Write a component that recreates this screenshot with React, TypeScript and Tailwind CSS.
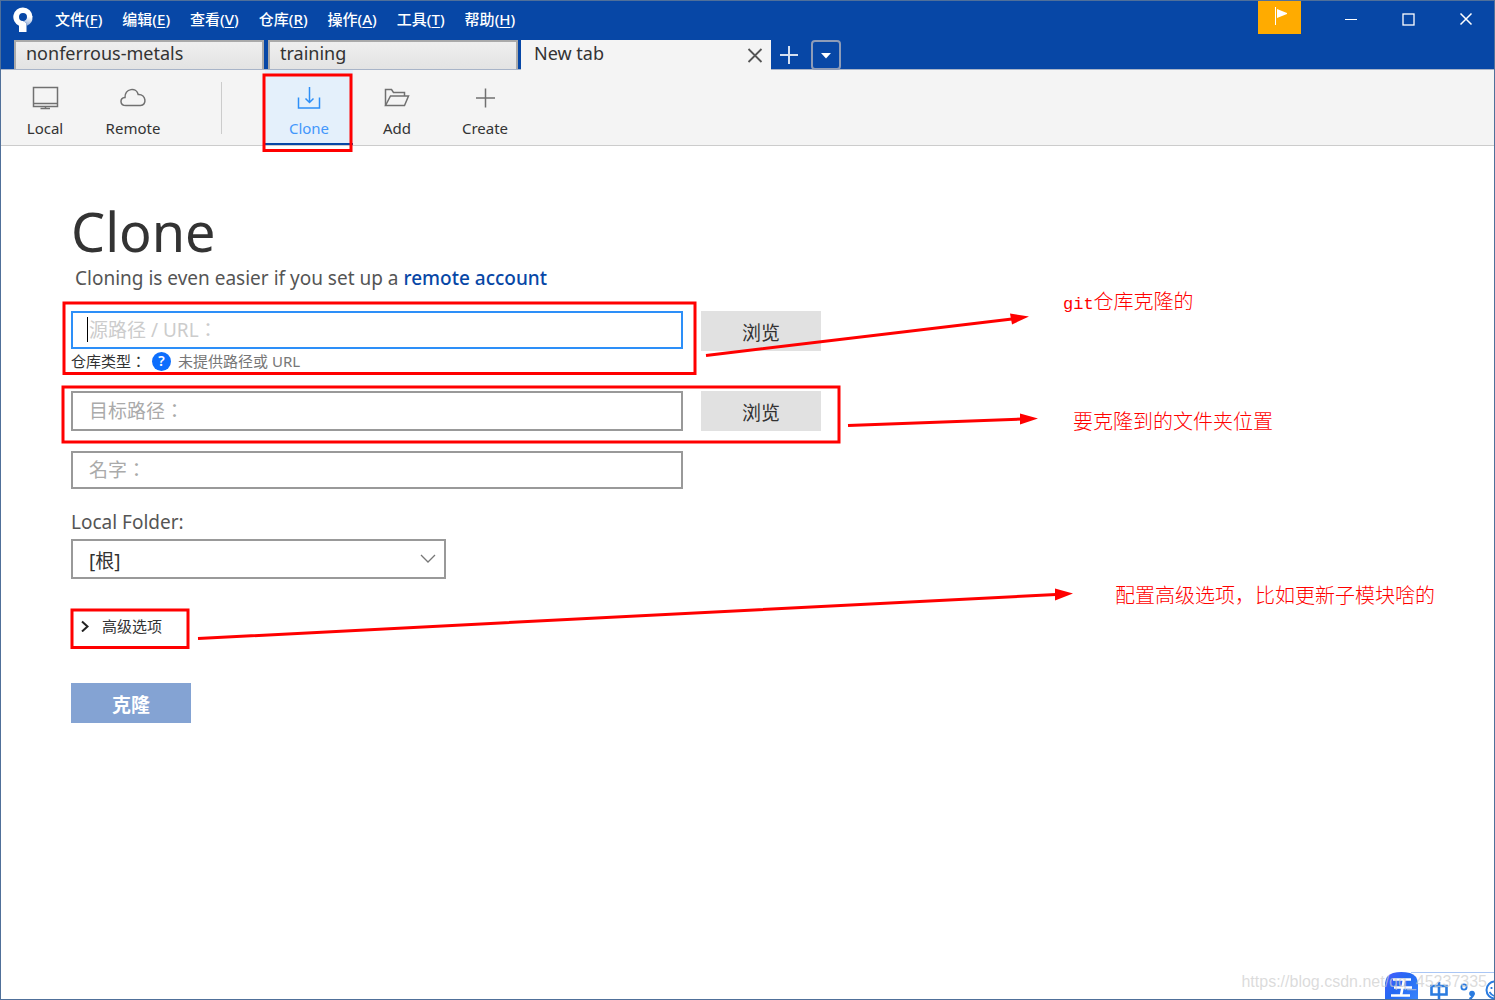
import type { ReactNode } from 'react';

const MENUS = [
  { label: '文件', hotkey: 'F' },
  { label: '编辑', hotkey: 'E' },
  { label: '查看', hotkey: 'V' },
  { label: '仓库', hotkey: 'R' },
  { label: '操作', hotkey: 'A' },
  { label: '工具', hotkey: 'T' },
  { label: '帮助', hotkey: 'H' },
];

const NOTES = [
  { prefix: 'git', text: '仓库克隆的', place: 'left-[1063px] top-[287px]' },
  { prefix: '', text: '要克隆到的文件夹位置', place: 'left-[1073px] top-[407px]' },
  { prefix: '', text: '配置高级选项，比如更新子模块啥的', place: 'left-[1115px] top-[581px]' },
];

function Logo() {
  return (
    <svg width="20" height="26" viewBox="0 0 20 26" aria-hidden="true">
      <defs>
        <linearGradient id="shade" x1="0.6" y1="0" x2="0.4" y2="1">
          <stop offset="0" stopColor="#ffffff" />
          <stop offset="1" stopColor="#8fabd8" />
        </linearGradient>
      </defs>
      <path d="M10 0.5 A9.5 9.5 0 0 0 6 18.7 V25 H13.5 V16 L10 14 A4 4 0 1 1 14 10 L19.5 10 A9.5 9.5 0 0 0 10 0.5Z" fill="#fff" />
      <path d="M14 9.5 H19.5 A9.5 9.5 0 0 1 13.5 19 V16 L10 14 A4 4 0 0 0 14 9.5Z" fill="url(#shade)" />
    </svg>
  );
}

function TitleBar() {
  return (
    <header className="flex h-[39px] items-start text-white">
      <div className="flex h-[37px] w-[46px] items-center pl-3">
        <Logo />
      </div>
      <nav className="flex h-[36px] items-center gap-[10px]">
        {MENUS.map((m) => (
          <button key={m.hotkey} className="px-[5px] text-[15px] leading-5 font-medium first:pl-2">
            {m.label}(<span className="underline underline-offset-2">{m.hotkey}</span>)
          </button>
        ))}
      </nav>
      <div className="ml-auto flex items-start">
        <button aria-label="Notifications" className="mr-5 flex h-[33px] w-[43px] justify-center bg-[#ffab00] pt-[6px]">
          <svg width="14" height="19" viewBox="0 0 14 19">
            <path d="M2.5 0 V18" stroke="#fff" strokeWidth="1" />
            <path d="M4 2 L15 6.5 L4 11 Z" fill="#fff" />
          </svg>
        </button>
        <button aria-label="Minimize" className="flex h-[36px] w-[58px] items-center justify-center">
          <svg width="14" height="14" viewBox="0 0 14 14" fill="none" stroke="#fff">
            <path d="M2 7.5 H14" />
          </svg>
        </button>
        <button aria-label="Maximize" className="flex h-[36px] w-[58px] items-center justify-center">
          <svg width="14" height="14" viewBox="0 0 14 14" fill="none" stroke="#fff">
            <rect x="2" y="2" width="11" height="11" strokeWidth="1.3" />
          </svg>
        </button>
        <button aria-label="Close" className="flex h-[36px] w-[57px] items-center justify-center">
          <svg width="14" height="14" viewBox="0 0 14 14" fill="none" stroke="#fff">
            <path d="M1.5 1.5 L12.5 12.5 M12.5 1.5 L1.5 12.5" strokeWidth="1.5" />
          </svg>
        </button>
      </div>
    </header>
  );
}

function TabBar() {
  return (
    <div className="flex h-[30px] items-stretch border-b border-[#a8b4c8] pl-[13px] text-lg leading-[26px] text-[#333]">
      <button className="mr-1 w-[250px] border-x-2 border-t-2 border-[#aaa] bg-linear-to-b from-[#efefef] to-[#e3e3e3] pl-[10px] text-left leading-[22px]">
        <span className="block h-full">nonferrous-metals</span>
      </button>
      <button className="mr-[3px] w-[250px] border-x-2 border-t-2 border-[#aaa] bg-linear-to-b from-[#efefef] to-[#e3e3e3] pl-[10px] text-left leading-[22px]">
        <span className="block h-full">training</span>
      </button>
      <div className="-mb-px flex w-[250px] justify-between bg-[#f4f4f4] pr-2 pl-[13px]">
        <span>New tab</span>
        <button aria-label="Close tab" className="flex items-center">
          <svg width="16" height="16" viewBox="0 0 16 16" fill="none" stroke="#555" strokeWidth="1.8">
            <path d="M1.5 2 L14.5 15 M14.5 2 L1.5 15" />
          </svg>
        </button>
      </div>
      <button aria-label="New tab" className="flex items-center pl-[9px]">
        <svg width="18" height="18" viewBox="0 0 18 18" fill="none" stroke="#d5e0f0" strokeWidth="2">
          <path d="M9 0 V18 M0 9 H18" />
        </svg>
      </button>
      <button
        aria-label="Tab list"
        className="-mb-px ml-[13px] flex w-[30px] items-center justify-center rounded-sm border-2 border-[#8d9cb8]"
      >
        <svg width="12" height="8" viewBox="0 0 12 8">
          <path d="M1 2 H11 L6 7.5 Z" fill="#fff" />
        </svg>
      </button>
    </div>
  );
}

function ToolButton({ label, active, children }: { label: string; active?: boolean; children: ReactNode }) {
  return (
    <button
      className={`flex w-[88px] flex-col items-center border-b-2 pt-[13px] text-[15px] leading-5 ${
        active ? 'border-[#0747a6] bg-[#e4f0fb] text-[#4297fb]' : 'border-transparent text-[#333]'
      }`}
    >
      <svg
        width="30"
        height="30"
        viewBox="0 0 30 30"
        fill="none"
        stroke={active ? '#2d8ff8' : '#707070'}
        strokeWidth="1.5"
        aria-hidden="true"
      >
        {children}
      </svg>
      <span className="mt-[5px]">{label}</span>
    </button>
  );
}

function Toolbar() {
  return (
    <div className="flex h-[76px] border-b border-[#ccc] bg-[#f4f4f4]">
      <ToolButton label="Local">
        <path d="M3.5 4.5 H27.5 V23.5 H3.5 Z M3.5 20.5 H27.5" />
        <path d="M10.5 25.5 H20 M15.5 23.5 V25.5" />
      </ToolButton>
      <ToolButton label="Remote">
        <path d="M8 22.5 C1.5 22.5 1.5 15 7 14.5 C7 5 18.5 4 20.2 11.5 C28.5 11 29 22.5 22.5 22.5 Z" />
      </ToolButton>
      <div className="flex w-[88px] items-center justify-center">
        <span className="h-[52px] w-px bg-[#ccc]" />
      </div>
      <ToolButton label="Clone" active>
        <path d="M4.5 14.5 V25 H25.5 V14.5" />
        <path d="M15.5 4 V20 M11.5 15.5 L15.5 19.5 L19.5 15.5" />
      </ToolButton>
      <ToolButton label="Add">
        <path d="M3.5 22.5 V6.5 H9.5 L11.5 9.5 H22.5 V13" />
        <path d="M3.5 22.5 L8.5 13 H26.5 L22.5 22.5 Z" />
      </ToolButton>
      <ToolButton label="Create">
        <path d="M15.5 5.5 V24.5 M6 15 H25" />
      </ToolButton>
    </div>
  );
}

function ClonePage() {
  const field =
    "block w-full border-2 bg-white pl-4 text-[19px] text-[#333] outline-none font-['Noto_Sans','Noto_Sans_CJK_TC',sans-serif]";
  const browse = 'h-10 w-[120px] shrink-0 bg-[#e1e1e1] pt-1 text-[19px] text-[#333]';

  return (
    <main className="flex-1 bg-white px-[70px] pt-[53px] text-[#333]">
      <h1 className="text-[54px] leading-[64px]">Clone</h1>
      <p className="pt-px pl-1 text-[19px] leading-7 text-[#555]">
        Cloning is even easier if you set up a{' '}
        <a href="#remote" className="font-medium text-[#0747a6]">
          remote account
        </a>
      </p>

      <div className="mt-[19px] flex items-start gap-[18px]">
        <div className="relative w-[612px]">
          <input
            aria-label="源路径 / URL"
            placeholder="源路径 / URL："
            className={`${field} h-[38px] border-[#2d8ff8] placeholder:text-[#ccc]`}
          />
          <span className="absolute top-[6px] left-4 h-[25px] w-px bg-black" />
          <div className="flex h-6 items-center text-[15px]">
            <span>
              仓库类型<span className="font-['Noto_Sans_CJK_TC',sans-serif]">：</span>
            </span>
            <span className="mr-[7px] ml-[6px] flex size-[19px] items-center justify-center rounded-full bg-[#0d6efd] text-sm font-semibold text-white">
              ?
            </span>
            <span className="text-[#777]">未提供路径或 URL</span>
          </div>
        </div>
        <button className={browse}>浏览</button>
      </div>

      <div className="mt-[18px] flex gap-[18px]">
        <div className="w-[612px]">
          <input
            aria-label="目标路径"
            placeholder="目标路径："
            className={`${field} h-10 border-[#999] placeholder:text-[#aaa]`}
          />
        </div>
        <button className={browse}>浏览</button>
      </div>

      <div className="mt-5 w-[612px]">
        <input
          aria-label="名字"
          placeholder="名字："
          className={`${field} h-[38px] border-[#999] placeholder:text-[#aaa]`}
        />
      </div>

      <label htmlFor="folder" className="mt-[19px] block text-[19px] leading-7 text-[#555]">
        Local Folder:
      </label>
      <div className="relative mt-[3px] w-[375px]">
        <select id="folder" className={`${field} h-10 appearance-none border-[#999] pt-1`}>
          <option>[根]</option>
        </select>
        <svg
          className="pointer-events-none absolute top-[15px] right-[10px]"
          width="16"
          height="10"
          viewBox="0 0 16 10"
          fill="none"
          stroke="#777"
          strokeWidth="1.3"
        >
          <path d="M1 1 L8 8 L15 1" />
        </svg>
      </div>

      <button aria-expanded="false" className="mt-[35px] flex h-6 items-center gap-3 pl-[9px] text-[15px]">
        <svg width="10" height="12" viewBox="0 0 10 12" fill="none" stroke="#222" strokeWidth="2">
          <path d="M2 1.5 L7.5 6.5 L2 11.5" />
        </svg>
        高级选项
      </button>

      <button className="mt-[45px] h-10 w-[120px] bg-[#84a3d3] pt-1 text-[19px] font-bold text-white">克隆</button>
    </main>
  );
}

// Red boxes, arrows and remarks drawn over the window
function Annotations() {
  return (
    <div className="pointer-events-none absolute -top-px -left-px">
      <svg width="1100" height="680" viewBox="0 0 1100 680" fill="none" stroke="#f00" strokeWidth="3">
        <rect x="264" y="75" width="87" height="75.5" />
        <rect x="64" y="303" width="631" height="70.5" />
        <rect x="63" y="387" width="776" height="55" />
        <rect x="72" y="610" width="116" height="37.5" />
        <path d="M706 355.5 L1012 319 M848 425.5 L1022 419 M198 638.5 L1056 594.5" />
        <g fill="#f00" stroke="none">
          <path d="M1010 313.5 L1029 316.5 L1012 324.5 Z" />
          <path d="M1020 413.5 L1038 418.5 L1020 424.5 Z" />
          <path d="M1055 588.5 L1073 593.5 L1055 600.5 Z" />
        </g>
      </svg>
      {NOTES.map((n) => (
        <p key={n.text} className={`absolute ${n.place} text-xl leading-[30px] font-light whitespace-nowrap text-[#f00]`}>
          {n.prefix && <span className="font-['Liberation_Mono',monospace] text-[17px]">{n.prefix}</span>}
          {n.text}
        </p>
      ))}
    </div>
  );
}

function ImeBar() {
  return (
    <div className="absolute -right-px -bottom-px h-[28px] w-[110px] overflow-hidden">
      <div className="absolute top-0 right-0 h-[28px] w-[84px] border-t border-[#a9c6f5] bg-white" />
      <svg className="absolute top-0 left-0" width="110" height="36" viewBox="0 0 110 36" fill="none">
        <defs>
          <linearGradient id="ime" x1="0" y1="0" x2="1" y2="1">
            <stop offset="0" stopColor="#4a5cff" />
            <stop offset="0.4" stopColor="#2468f2" />
            <stop offset="1" stopColor="#3f8cff" />
          </linearGradient>
        </defs>
        <path d="M8 1 Q16 -1 25 1 Q32 3 33 11 V28 Q31 36 17 36 Q2 36 0 28 V11 Q1 3 8 1Z" fill="url(#ime)" />
        <path d="M8 7.5 H26 M9 15.5 H27 M6 23.5 H25 M19 7.5 L16 23.5" stroke="#fff" strokeWidth="2.6" />
        <path d="M46.500 14 H61.500 V22.500 H46.500 Z M54 10 V32" stroke="#2a7be0" strokeWidth="2.6" />
        <circle cx="79" cy="15" r="2.6" stroke="#2a7be0" strokeWidth="1.8" />
        <circle cx="87" cy="21.5" r="2.8" fill="#2a7be0" />
        <path d="M88.5 21 Q88.5 25 84.5 27" stroke="#2a7be0" strokeWidth="2.4" />
        <circle cx="110" cy="18" r="8.5" stroke="#2a7be0" strokeWidth="2" />
        <path d="M106.5 15 V17 M104.5 20 Q107 24 110 24" stroke="#2a7be0" strokeWidth="1.8" />
      </svg>
    </div>
  );
}

export default function App() {
  return (
    <div className="relative flex min-h-screen flex-col overflow-hidden border border-[#50709a] bg-[#0747a6] font-['Noto_Sans','Noto_Sans_CJK_SC',sans-serif]">
      <TitleBar />
      <TabBar />
      <Toolbar />
      <ClonePage />
      <Annotations />
      <ImeBar />
      <p className="absolute right-[7px] bottom-[5px] font-['Liberation_Sans',sans-serif] text-base text-[#ccc]/70">
        https://blog.csdn.net/qq_45237335
      </p>
    </div>
  );
}
